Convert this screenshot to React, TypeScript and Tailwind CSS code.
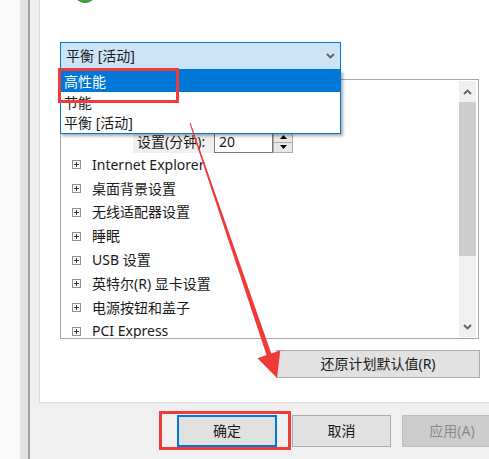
import React from "react";

const font = { fontFamily: '"Noto Sans", "Noto Sans CJK SC", sans-serif' };

function PlusBox() {
  return (
    <div className="w-[9px] h-[9px] border border-[#919191] bg-white flex items-center justify-center shrink-0">
      <svg width="7" height="7" viewBox="0 0 7 7">
        <path d="M1 3.5H6M3.5 1V6" stroke="#333" strokeWidth="1" />
      </svg>
    </div>
  );
}

function Chevron({ up }: { up?: boolean }) {
  return (
    <svg width="9" height="6" viewBox="0 0 9 6">
      <path
        d={up ? "M1 5L4.5 1.5L8 5" : "M1 1L4.5 4.5L8 1"}
        stroke="#606060"
        strokeWidth="1.8"
        fill="none"
      />
    </svg>
  );
}

const treeItems = [
  "Internet Explorer",
  "桌面背景设置",
  "无线适配器设置",
  "睡眠",
  "USB 设置",
  "英特尔(R) 显卡设置",
  "电源按钮和盖子",
  "PCI Express",
];

export default function App() {
  return (
    <div
      className="w-[489px] h-[459px] flex overflow-hidden relative bg-[#f0f0f0] text-[14px] text-[#1a1a1a]"
      style={font}
    >
      <div className="w-[20px] shrink-0 bg-[#f9f9f9]" />
      <div className="w-[8px] shrink-0 bg-[#e4e4e4]" />
      <div className="w-[2px] shrink-0 bg-[#a3a3a3]" />
      <div className="flex-1 flex flex-col pl-[9px] bg-[#f0f0f0]">
        {/* white panel */}
        <div className="w-[470px] h-[403px] shrink-0 bg-white border-l border-b border-[#dcdcdc] flex flex-col">
          <div className="mt-[-21px] ml-[33px] w-[24px] h-[24px] rounded-full bg-[#42a844] border border-[#2c7d31] shrink-0" />
          {/* combobox */}
          <div className="relative ml-[20px] mt-[39px] w-[281px] h-[28px] shrink-0">
            <div className="h-full bg-[#cce4f7] border border-[#0078d7] flex items-center pl-[5px] pr-[5px] justify-between">
              <span className="leading-none">平衡 [活动]</span>
              <Chevron />
            </div>
            {/* open list */}
            <div className="absolute left-0 top-[28px] w-[281px] z-10 bg-white border border-[#0078d7] shadow-[2px_2px_3px_rgba(0,0,0,0.35)]">
              <div className="h-[21px] bg-[#0078d7] text-white flex items-center pl-[3px] leading-none">高性能</div>
              <div className="h-[21px] flex items-center pl-[3px] leading-none">节能</div>
              <div className="h-[20px] flex items-center pl-[3px] leading-none">平衡 [活动]</div>
            </div>
          </div>
          {/* tree box */}
          <div className="ml-[20px] mt-[9px] w-[419px] h-[260px] shrink-0 border border-[#a7a7a7] flex overflow-hidden">
            <div className="flex-1 flex flex-col overflow-hidden">
              <div className="h-[51px] shrink-0" />
              <div className="h-[22px] shrink-0 flex items-stretch">
                <div className="ml-[72px] w-[81px] bg-[#f0f0f0] flex items-center pl-[4px] leading-none">设置(分钟):</div>
                <div className="w-[59px] border border-[#7a7a7a] bg-white flex items-center pl-[4px] leading-none">20</div>
                <div className="w-[20px] flex flex-col">
                  <div className="flex-1 bg-[#e8e8e8] border border-[#adadad] flex items-center justify-center">
                    <svg width="7" height="4" viewBox="0 0 7 4"><path d="M0 4L3.5 0L7 4Z" fill="#000" /></svg>
                  </div>
                  <div className="flex-1 bg-[#e8e8e8] border border-t-0 border-[#adadad] flex items-center justify-center">
                    <svg width="7" height="4" viewBox="0 0 7 4"><path d="M0 0L3.5 4L7 0Z" fill="#000" /></svg>
                  </div>
                </div>
              </div>
              {treeItems.map((t) => (
                <div key={t} className="h-[23.8px] shrink-0 flex items-center pl-[11px] gap-[11px]">
                  <PlusBox />
                  <span className="leading-none whitespace-nowrap">{t}</span>
                </div>
              ))}
            </div>
            <div className="w-[17px] shrink-0 mr-[2px] my-[1px] flex flex-col">
              <div className="h-[21px] bg-[#f0f0f0] flex items-center justify-center">
                <Chevron up />
              </div>
              <div className="h-[154px] bg-[#cdcdcd]" />
              <div className="flex-1 bg-[#f0f0f0]" />
              <div className="h-[20px] bg-[#f0f0f0] flex items-center justify-center">
                <Chevron />
              </div>
            </div>
          </div>
          {/* reset button */}
          <div className="ml-[236px] mt-[11px] w-[204px] h-[28px] shrink-0 bg-[#e1e1e1] border border-[#adadad] flex items-center justify-center leading-none">
            还原计划默认值(R)
          </div>
        </div>
        {/* bottom buttons */}
        <div className="flex pt-[12px] ml-[138px] shrink-0">
          <div className="w-[100px] h-[32px] shrink-0 bg-[#e1e1e1] border-2 border-[#0078d7] flex items-center justify-center leading-none">确定</div>
          <div className="w-[99px] h-[32px] shrink-0 ml-[15px] bg-[#e1e1e1] border border-[#adadad] flex items-center justify-center leading-none">取消</div>
          <div className="w-[100px] h-[32px] shrink-0 ml-[11px] bg-[#cccccc] border border-[#bfbfbf] text-[#8a8a8a] flex items-center justify-center leading-none">应用(A)</div>
        </div>
      </div>

      {/* annotations */}
      <div className="absolute left-[58px] top-[68px] w-[121px] h-[35px] border-[3px] border-[#f03b3b] z-20" />
      <div className="absolute left-[159px] top-[411px] w-[132px] h-[39px] border-[3px] border-[#f03b3b] z-20" />
      <svg className="absolute left-0 top-0 z-20" width="489" height="459" viewBox="0 0 489 459">
        <polygon
          points="189.5,123.2 190.5,122.8 271.3,353.5 280.3,350.4 277,378 257.5,358.2 266.5,355.1"
          fill="#f03a3a"
        />
      </svg>
    </div>
  );
}
